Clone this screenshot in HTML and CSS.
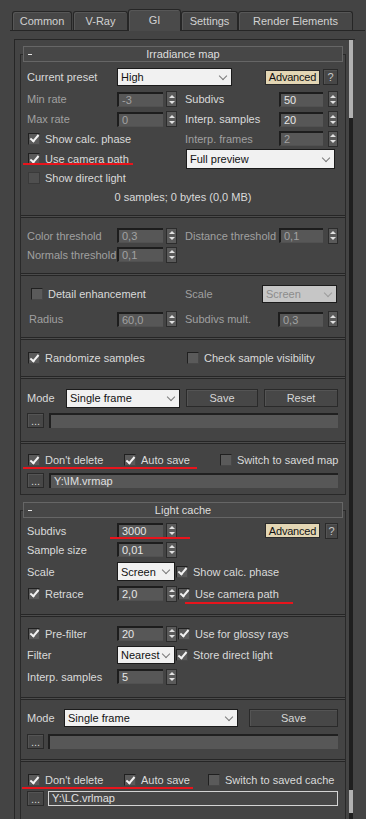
FILE: index.html
```html
<!DOCTYPE html>
<html>
  <head>
    <title>Render Setup - GI</title>
    <meta charset="utf-8" />
    <link rel="stylesheet" href="styles.css">
  </head>
  <body>
    <div class="tabs">
      <div class="tab t-common">Common</div>
      <div class="tab t-vray">V-Ray</div>
      <div class="tab t-gi active">GI</div>
      <div class="tab t-settings">Settings</div>
      <div class="tab t-re">Render Elements</div>
    </div>

    <div class="panel">
      <div class="rollouts">

        <!-- Irradiance map -->
        <div class="rollout">
          <div class="rollhead"><span class="minus"></span><span class="title">Irradiance map</span></div>

          <div class="group im1">
            <div class="row h20">
              <span class="lbl">Current preset</span>
              <div class="combo w-preset">High</div>
              <div class="btn adv im-adv">Advanced</div>
              <div class="btn q">?</div>
            </div>
            <div class="row h20 mt2">
              <span class="lbl dim">Min rate</span>
              <div class="spin dim"><span class="field">-3</span><span class="arrows"></span></div>
              <span class="lbl2">Subdivs</span>
              <div class="spin2"><span class="field">50</span><span class="arrows"></span></div>
            </div>
            <div class="row h20">
              <span class="lbl dim">Max rate</span>
              <div class="spin dim"><span class="field">0</span><span class="arrows"></span></div>
              <span class="lbl2">Interp. samples</span>
              <div class="spin2"><span class="field">20</span><span class="arrows"></span></div>
            </div>
            <div class="row h19">
              <label class="chk w150"><span class="cb on"></span>Show calc. phase</label>
              <span class="lbl2 dim">Interp. frames</span>
              <div class="spin2 dim"><span class="field">2</span><span class="arrows"></span></div>
            </div>
            <div class="row h22">
              <label class="chk w150"><span class="cb on"></span>Use camera path</label>
              <div class="combo w-preview">Full preview</div>
            </div>
            <div class="row h15">
              <label class="chk"><span class="cb dis"></span>Show direct light</label>
            </div>
            <div class="row h20 mt2 info">0 samples; 0 bytes (0,0 MB)</div>
          </div>
          <div class="sep"></div>

          <div class="group im2">
            <div class="row h19">
              <span class="lbl dim">Color threshold</span>
              <div class="spin dim"><span class="field">0,3</span><span class="arrows"></span></div>
              <span class="lbl2 dim">Distance threshold</span>
              <div class="spin2 dim"><span class="field">0,1</span><span class="arrows"></span></div>
            </div>
            <div class="row h19">
              <span class="lbl dim">Normals threshold</span>
              <div class="spin dim"><span class="field">0,1</span><span class="arrows"></span></div>
            </div>
          </div>
          <div class="sep"></div>

          <div class="group im3">
            <div class="row h20">
              <label class="chk detail"><span class="cb"></span>Detail enhancement</label>
              <span class="lbl-scale dim">Scale</span>
              <div class="combo disabled w-scale">Screen</div>
            </div>
            <div class="row h20 mt5">
              <span class="lbl dim radius">Radius</span>
              <div class="spin dim"><span class="field">60,0</span><span class="arrows"></span></div>
              <span class="lbl2 dim mult">Subdivs mult.</span>
              <div class="spin2 dim wide"><span class="field">0,3</span><span class="arrows"></span></div>
            </div>
          </div>
          <div class="sep"></div>

          <div class="group im4">
            <div class="row h20">
              <label class="chk w159"><span class="cb on"></span>Randomize samples</label>
              <label class="chk"><span class="cb"></span>Check sample visibility</label>
            </div>
          </div>
          <div class="sep"></div>

          <div class="group im5">
            <div class="row h20">
              <span class="lbl-mode">Mode</span>
              <div class="combo w-mode h19">Single frame</div>
              <div class="btn w-save">Save</div>
              <div class="btn w-reset">Reset</div>
            </div>
            <div class="row h15 mt5">
              <div class="btn dots">...</div>
              <div class="path"></div>
            </div>
          </div>
          <div class="sep"></div>

          <div class="group im6">
            <div class="row h18">
              <label class="chk w96"><span class="cb on"></span>Don't delete</label>
              <label class="chk w96"><span class="cb on"></span>Auto save</label>
              <label class="chk"><span class="cb"></span>Switch to saved map</label>
            </div>
            <div class="row h15 mt4">
              <div class="btn dots">...</div>
              <div class="path">Y:\IM.vrmap</div>
            </div>
          </div>
        </div>

        <!-- Light cache -->
        <div class="rollout lc">
          <div class="rollhead"><span class="minus"></span><span class="title">Light cache</span></div>

          <div class="group lc1">
            <div class="row h19">
              <span class="lbl">Subdivs</span>
              <div class="spin"><span class="field">3000</span><span class="arrows"></span></div>
              <div class="btn adv lc-adv">Advanced</div>
              <div class="btn q lc-q">?</div>
            </div>
            <div class="row h19">
              <span class="lbl">Sample size</span>
              <div class="spin"><span class="field">0,01</span><span class="arrows"></span></div>
            </div>
            <div class="row h19 mt3">
              <span class="lbl">Scale</span>
              <div class="combo w-small h19">Screen</div>
              <label class="chk ml12"><span class="cb on"></span>Show calc. phase</label>
            </div>
            <div class="row h19 mt3">
              <label class="chk w89"><span class="cb on"></span>Retrace</label>
              <div class="spin"><span class="field">2,0</span><span class="arrows"></span></div>
              <label class="chk ml10"><span class="cb on"></span>Use camera path</label>
            </div>
          </div>
          <div class="sep"></div>

          <div class="group lc2">
            <div class="row h19">
              <label class="chk w89"><span class="cb on"></span>Pre-filter</label>
              <div class="spin"><span class="field">20</span><span class="arrows"></span></div>
              <label class="chk ml10"><span class="cb on"></span>Use for glossy rays</label>
            </div>
            <div class="row h20 mt2">
              <span class="lbl">Filter</span>
              <div class="combo w-small">Nearest</div>
              <label class="chk ml12"><span class="cb on"></span>Store direct light</label>
            </div>
            <div class="row h19 mt2">
              <span class="lbl">Interp. samples</span>
              <div class="spin"><span class="field">5</span><span class="arrows"></span></div>
            </div>
          </div>
          <div class="sep"></div>

          <div class="group lc3">
            <div class="row h20">
              <span class="lbl-mode lc-mode">Mode</span>
              <div class="combo w-lcmode">Single frame</div>
              <div class="btn w-lcsave">Save</div>
            </div>
            <div class="row h15 mt6">
              <div class="btn dots">...</div>
              <div class="path lc-path"></div>
            </div>
          </div>
          <div class="sep"></div>

          <div class="group lc4">
            <div class="row h18">
              <label class="chk w96"><span class="cb on"></span>Don't delete</label>
              <label class="chk w84"><span class="cb on"></span>Auto save</label>
              <label class="chk"><span class="cb"></span>Switch to saved cache</label>
            </div>
            <div class="row h15 mt2">
              <div class="btn dots">...</div>
              <div class="path lc-path focus">Y:\LC.vrlmap</div>
            </div>
          </div>
        </div>

      </div>
      <div class="scrollbar">
        <div class="thumb top"></div>
        <div class="track"></div>
        <div class="thumb bottom"></div>
      </div>
    </div>

    <!-- red annotation lines drawn over the screenshot -->
    <div class="mark m1"></div>
    <div class="mark m2"></div>
    <div class="mark m3"></div>
    <div class="mark m4"></div>
    <div class="mark m5"></div>
  </body>
</html>
```

FILE: styles.css
```css
* {
  box-sizing: border-box;
}
body {
  margin: 0;
  height: 819px;
  overflow: hidden;
  position: relative;
  background: #444;
  font-family: "Liberation Sans", Arial, sans-serif;
  font-size: 11px;
  color: #dadada;
}

/* tabs */
.tabs {
  display: flex;
  align-items: flex-end;
  height: 31px;
  margin: 0 1px 0 10px;
  padding-left: 2px;
  border-bottom: 1px solid #262626;
}
.tab {
  height: 19px;
  line-height: 18px;
  text-align: center;
  background: #474747;
  border: 1px solid #262626;
  border-bottom: none;
  border-radius: 3px 3px 0 0;
  box-shadow: inset 1px 1px 0 #575757;
  color: #d2d2d2;
}
.t-common { width: 60px; }
.t-vray { width: 55px; margin-left: 1px; }
.t-gi { width: 53px; }
.t-settings { width: 57px; }
.t-re { width: 115px; }
.tab.active {
  height: 22px;
  margin-bottom: -1px;
  line-height: 20px;
  background: #4a4a4a;
}

/* panel */
.panel {
  display: flex;
  height: 780px;
  margin: 8px 11px 0 14px;
  border-top: 1px solid #262626;
  border-left: 1px solid #262626;
}
.rollouts {
  width: 331px;
  padding-left: 5px;
}
.scrollbar {
  display: flex;
  flex-direction: column;
  width: 4px;
  margin-left: 3px;
  background: #1f1f1f;
}
.scrollbar .thumb { background: #b2b2b2; }
.scrollbar .thumb.top { height: 78px; }
.scrollbar .track { flex: 1; }
.scrollbar .thumb.bottom { height: 23px; margin-bottom: 6px; }

.rollout {
  margin-top: 14px;
  border: 1px solid #292929;
}
.rollout.lc {
  margin-top: 15px;
  border-bottom: none;
  padding-bottom: 30px;
}
.rollhead {
  display: flex;
  align-items: center;
  height: 16px;
  margin: -9px 2px 0 2px;
  background: #474747;
  border: 1px solid #666;
}
.rollhead .minus {
  width: 9px;
  height: 100%;
  padding-left: 4px;
  display: flex;
  align-items: center;
}
.rollhead .minus::before {
  content: "";
  width: 4px;
  height: 1px;
  background: #e6e6e6;
}
.rollhead .title {
  flex: 1;
  margin-right: 9px;
  text-align: center;
  color: #dedede;
}

.sep {
  height: 3px;
  border-top: 1px solid #262626;
  border-bottom: 1px solid #262626;
  background: #4b4b4b;
}

.group { padding-left: 6px; }
.im1 { padding-top: 5px; padding-bottom: 8px; }
.im2 { padding-top: 8px; padding-bottom: 9px; }
.im3 { padding-top: 8px; padding-bottom: 8px; }
.im4 { padding-top: 8px; padding-bottom: 8px; }
.im5 { padding-top: 9px; padding-bottom: 13px; }
.im6 { padding-top: 7px; padding-bottom: 6px; }
.lc1 { padding-top: 3px; padding-bottom: 11px; }
.lc2 { padding-top: 7px; padding-bottom: 11px; }
.lc3 { padding-top: 8px; padding-bottom: 10px; }
.lc4 { padding-top: 9px; }

/* rows */
.row {
  display: flex;
  align-items: center;
  white-space: nowrap;
}
.h15 { height: 15px; }
.h18 { height: 18px; }
.h19 { height: 19px; }
.h20 { height: 20px; }
.h22 { height: 22px; }
.mt2 { margin-top: 2px; }
.mt3 { margin-top: 3px; }
.mt4 { margin-top: 4px; }
.mt5 { margin-top: 5px; }
.mt6 { margin-top: 6px; }
.ml10 { margin-left: 10px; }
.ml12 { margin-left: 12px; }

.dim { color: #a0a0a0; }
.lbl { width: 90px; flex: none; }
.lbl.radius { width: 88px; margin-left: 2px; }
.lbl2 { width: 94px; margin-left: 8px; flex: none; }
.lbl2.mult { width: 93px; }
.lbl-scale { width: 77px; }
.lbl-mode { width: 39px; }
.lbl-mode.lc-mode { width: 37px; }
.info {
  justify-content: center;
  padding-right: 6px;
}

/* spinners */
.spin, .spin2 {
  display: flex;
  align-items: center;
  flex: none;
}
.spin { gap: 3px; }
.spin2 { gap: 5px; }
.field {
  height: 15px;
  line-height: 13px;
  padding-left: 3px;
  background: #575757;
  border-top: 2px solid #1d1d1d;
  border-left: 2px solid #1d1d1d;
  border-bottom: 1px solid #515151;
  color: #e6e6e6;
}
.dim .field { color: #a2a2a2; }
.spin .field { width: 46px; }
.spin2 .field { width: 44px; }
.spin2.wide .field { width: 45px; }
.arrows {
  display: flex;
  flex-direction: column;
  align-items: center;
  justify-content: center;
  gap: 3px;
  width: 11px;
  height: 16px;
  background: #5a5a5a;
  border: 1px solid #2c2c2c;
}
.spin2 .arrows { width: 10px; }
.arrows::before, .arrows::after {
  content: "";
  border-left: 3px solid transparent;
  border-right: 3px solid transparent;
}
.arrows::before { border-bottom: 3px solid #e2e2e2; }
.arrows::after { border-top: 3px solid #e2e2e2; }

/* drop-down lists */
.combo {
  display: flex;
  align-items: center;
  justify-content: space-between;
  height: 18px;
  padding-left: 3px;
  overflow: hidden;
  background: #f1f1f1;
  border: 1px solid #1b1b1b;
  color: #111;
}
.combo::after {
  content: "";
  flex: none;
  width: 5px;
  height: 5px;
  margin: -3px 5px 0 3px;
  border-right: 1px solid #7a7a7a;
  border-bottom: 1px solid #7a7a7a;
  transform: rotate(45deg);
}
.combo.disabled {
  background: #c6c6c6;
  color: #8c8c8c;
}
.combo.disabled::after { border-color: #9c9c9c; }
.combo.h19 { height: 19px; }
.w-preset { width: 115px; }
.w-preview { width: 149px; height: 20px; margin-left: 9px; }
.w-scale { width: 75px; }
.w-mode { width: 114px; }
.w-small { width: 58px; }
.w-lcmode { width: 174px; }

/* buttons */
.btn {
  display: flex;
  align-items: center;
  justify-content: center;
  height: 18px;
  background: #474747;
  border: 1px solid #2a2a2a;
  box-shadow: inset 1px 1px 0 #545454;
  color: #d6d6d6;
  flex: none;
}
.btn.adv {
  width: 55px;
  height: 15px;
  background: #e3d6b4;
  box-shadow: none;
  color: #111;
  letter-spacing: -0.2px;
}
.im-adv { margin-left: 33px; }
.lc-adv { margin-left: 88px; }
.btn.q {
  width: 15px;
  height: 16px;
  margin-left: 3px;
  color: #c8c8c8;
}
.btn.lc-q { width: 13px; margin-left: 5px; }
.w-save { width: 72px; margin-left: 6px; }
.w-reset { width: 74px; margin-left: 6px; }
.w-lcsave { width: 89px; margin-left: 11px; }
.btn.dots {
  width: 17px;
  height: 15px;
  align-items: flex-end;
  padding-bottom: 2px;
  line-height: 8px;
  margin-left: 0;
}

.path {
  width: 289px;
  height: 15px;
  margin-left: 5px;
  padding-left: 3px;
  line-height: 13px;
  background: #575757;
  border-top: 2px solid #202020;
  border-left: 2px solid #202020;
  color: #e0e0e0;
}
.path.lc-path { width: 290px; margin-left: 4px; }
.path.focus {
  background: #474747;
  border: 1px solid #d4d4d4;
  line-height: 13px;
}

/* check boxes */
.chk {
  display: flex;
  align-items: center;
  margin-left: 1px;
  flex: none;
}
.w150 { width: 149px; }
.w159 { width: 159px; }
.w96 { width: 96px; }
.w89 { width: 89px; }
.w84 { width: 84px; }
.chk.detail { width: 154px; margin-left: 4px; }
.chk.w96 + .chk { margin-left: 0; }
.chk.w84 + .chk { margin-left: 0; }
.chk.w159 + .chk { margin-left: 0; }
.cb {
  display: flex;
  align-items: center;
  justify-content: center;
  width: 12px;
  height: 12px;
  margin-right: 5px;
  background: #5a5a5a;
  border: 1px solid #202020;
  border-right-color: #484848;
  border-bottom-color: #484848;
}
.cb.on::after {
  content: "";
  width: 3px;
  height: 7px;
  margin-top: -2px;
  border-right: 2px solid #f2f2f2;
  border-bottom: 2px solid #f2f2f2;
  transform: rotate(40deg);
}
.cb.dis {
  background: #4f4f4f;
  border-color: #3a3a3a;
}

/* annotations */
.mark {
  position: absolute;
  height: 2px;
  background: #e8141c;
}
.m1 { left: 23px; top: 163px; width: 110px; }
.m2 { left: 23px; top: 467px; width: 174px; }
.m3 { left: 110px; top: 537px; width: 80px; }
.m4 { left: 185px; top: 602px; width: 108px; }
.m5 { left: 22px; top: 787px; width: 171px; }
```
